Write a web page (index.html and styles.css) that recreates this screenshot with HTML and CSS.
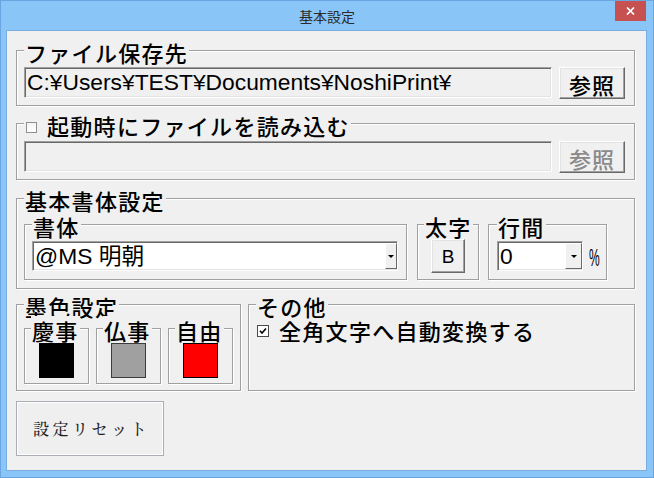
FILE: index.html
```html
<!DOCTYPE html>
<html lang="ja">
  <head>
    <meta charset="UTF-8" />
    <title>基本設定</title>
    <link rel="stylesheet" href="styles.css">
  </head>
  <body>
    <div class="window">
      <div class="titlebar">
        <div class="title">基本設定</div>
        <div class="close">
          <svg width="9" height="8" viewBox="0 0 9 8"><path d="M1 0.5 L8 7.5 M8 0.5 L1 7.5" stroke="#fff" stroke-width="1.7" fill="none"/></svg>
        </div>
      </div>

      <div class="content">
        <fieldset class="group g-save">
          <legend>ファイル保存先</legend>
          <div class="row">
            <div class="textbox">C:¥Users¥TEST¥Documents¥NoshiPrint¥</div>
            <button class="btn browse">参照</button>
          </div>
        </fieldset>

        <fieldset class="group g-load">
          <legend class="check-legend"><span class="check"></span>起動時にファイルを読み込む</legend>
          <div class="row">
            <div class="textbox"></div>
            <button class="btn browse" disabled>参照</button>
          </div>
        </fieldset>

        <fieldset class="group g-font">
          <legend>基本書体設定</legend>
          <div class="subrow">
            <fieldset class="sub sub-face">
              <legend>書体</legend>
              <div class="cell">
                <div class="select face">
                  <span class="value">@MS 明朝</span>
                  <span class="arrow"></span>
                </div>
              </div>
            </fieldset>
            <fieldset class="sub sub-bold">
              <legend>太字</legend>
              <div class="cell center">
                <button class="btn bold">B</button>
              </div>
            </fieldset>
            <fieldset class="sub sub-line">
              <legend>行間</legend>
              <div class="cell">
                <div class="select spacing">
                  <span class="value">0</span>
                  <span class="arrow"></span>
                </div>
                <span class="pct">%</span>
              </div>
            </fieldset>
          </div>
        </fieldset>

        <div class="bottom-row">
          <fieldset class="group g-ink">
            <legend>墨色設定</legend>
            <div class="inks">
              <fieldset class="sub ink">
                <legend>慶事</legend>
                <div class="swatch black"></div>
              </fieldset>
              <fieldset class="sub ink">
                <legend>仏事</legend>
                <div class="swatch gray"></div>
              </fieldset>
              <fieldset class="sub ink">
                <legend>自由</legend>
                <div class="swatch red"></div>
              </fieldset>
            </div>
          </fieldset>

          <fieldset class="group g-other">
            <legend>その他</legend>
            <div class="option">
              <span class="check checked">
                <svg width="10" height="10" viewBox="0 0 10 10"><path d="M2 4.8 L4 7 L8 2.5" stroke="#000" stroke-width="1.6" fill="none"/></svg>
              </span>
              全角文字へ自動変換する
            </div>
          </fieldset>
        </div>

        <button class="reset">設定リセット</button>
      </div>
    </div>
  </body>
</html>
```

FILE: styles.css
```css
* {
  box-sizing: border-box;
}

body {
  margin: 0;
  font-family: "Noto Sans CJK JP", sans-serif;
  background-color: #fff;
}

.window {
  width: 654px;
  height: 478px;
  background-color: #89c5f7;
  border: 1px solid #6ba5df;
  display: flex;
  flex-direction: column;
}

.titlebar {
  height: 30px;
  display: flex;
  padding-left: 38px;
  padding-right: 7px;
}

.title {
  flex: 1;
  text-align: center;
  font-size: 14px;
  line-height: 30px;
  color: #2b2b2b;
}

.close {
  width: 31px;
  height: 20px;
  background-color: #c75050;
  display: flex;
  align-items: center;
  justify-content: center;
}

.content {
  flex: 1;
  margin: 0 7px 7px 6px;
  padding: 7px 11px 0 9px;
  background-color: #f0f0f0;
  box-shadow: 0 0 0 1px #7aade2;
}

/* group boxes */
fieldset {
  margin: 0;
  min-width: 0;
  border: 1px solid #a0a0a0;
  box-shadow: 1px 1px 0 #fff, inset 1px 1px 0 #fff;
}

legend {
  padding: 4px 1px 0;
  font-size: 22px;
  font-weight: 500;
  line-height: 20px;
  letter-spacing: 1.3px;
  color: #000;
  background-color: #f0f0f0;
  white-space: nowrap;
}

.g-save {
  padding: 5px 9px 6px 7px;
}

.g-load {
  margin-top: 5px;
  padding: 6px 9px 6px 7px;
}

.g-font {
  margin-top: 6px;
  padding: 2px 7px 8px 7px;
}

.row {
  display: flex;
  align-items: flex-start;
  gap: 7px;
  height: 32px;
}

.textbox {
  flex: 1;
  height: 31px;
  padding: 0 2px;
  font-family: "Liberation Sans", "Noto Sans CJK JP", sans-serif;
  font-size: 22.8px;
  line-height: 29px;
  white-space: nowrap;
  overflow: hidden;
  background-color: #f0f0f0;
  border: 1px solid;
  border-color: #a0a0a0 #fff #fff #a0a0a0;
  box-shadow: inset 1px 1px 0 #696969, inset -1px -1px 0 #e3e3e3;
}

.btn {
  font-family: "Noto Sans CJK JP", sans-serif;
  background-color: #f0f0f0;
  color: #000;
  padding: 0;
  border: 1px solid;
  border-color: #fff #696969 #696969 #fff;
  box-shadow: inset -1px -1px 0 #a0a0a0, inset 1px 1px 0 #e3e3e3;
}

.browse {
  width: 66px;
  height: 32px;
  font-size: 22px;
  font-weight: 500;
  line-height: 26px;
  letter-spacing: 1px;
  padding-top: 2px;
}

.browse:disabled {
  color: #8a8a8a;
}

.check-legend {
  display: flex;
  align-items: center;
}

.check {
  width: 11px;
  height: 11px;
  margin: 5px 10px 0 1px;
  border: 1px solid #8f8f8f;
  background: linear-gradient(#f4f4f4, #fff);
  display: flex;
  align-items: center;
  justify-content: center;
}

/* font settings */
.subrow {
  display: flex;
}

.sub {
  padding: 3px 6px 6px 6px;
}

.sub-face {
  width: 383px;
  padding-left: 7px;
  padding-right: 8px;
}

.sub-bold {
  width: 62px;
  margin-left: 10px;
}

.sub-line {
  width: 119px;
  margin-left: 9px;
  padding-left: 8px;
}

.cell {
  display: flex;
  align-items: center;
  height: 34px;
}

.cell.center {
  justify-content: center;
}

.select {
  display: flex;
  height: 30px;
  background-color: #fff;
  border: 1px solid;
  border-color: #a0a0a0 #fff #fff #a0a0a0;
  box-shadow: inset 1px 1px 0 #696969, inset -1px -1px 0 #e3e3e3;
}

.select.face {
  width: 366px;
}

.select.spacing {
  width: 87px;
}

.select .value {
  flex: 1;
  padding-left: 2px;
  padding-top: 1px;
  font-family: "Liberation Sans", "Noto Sans CJK JP", sans-serif;
  font-size: 22.8px;
  line-height: 27px;
  white-space: nowrap;
}

.select .arrow {
  width: 12px;
  margin: 1px 0 1px 0;
  background-color: #f0f0f0;
  border: 1px solid;
  border-color: #fff #696969 #696969 #fff;
  display: flex;
  align-items: center;
  justify-content: center;
}

.select.spacing .arrow {
  width: 17px;
}

.select .arrow::after {
  content: "";
  border-left: 3px solid transparent;
  border-right: 3px solid transparent;
  border-top: 3px solid #000;
}

.bold {
  width: 34px;
  height: 34px;
  font-family: "Liberation Sans", sans-serif;
  font-size: 19px;
  line-height: 30px;
  padding-top: 1px;
}

.pct {
  display: inline-block;
  width: 11px;
  margin-left: 6px;
  margin-top: 4px;
  font-family: "Liberation Sans", sans-serif;
  font-size: 24px;
  line-height: 24px;
  transform: scaleX(0.5);
  transform-origin: left center;
}

/* ink colours */
.bottom-row {
  display: flex;
  gap: 7px;
  margin-top: 3px;
}

.g-ink {
  width: 225px;
  padding: 0 7px 6px 7px;
}

.inks {
  display: flex;
  gap: 7px;
}

.ink {
  width: 65px;
  padding: 3px 6px 5px 6px;
  display: flex;
  justify-content: center;
}

.swatch {
  width: 35px;
  height: 35px;
  border: 1px solid #000;
}

.swatch.black {
  background-color: #000;
}

.swatch.gray {
  background-color: #a0a0a0;
  border-color: #3c3c3c;
}

.swatch.red {
  background-color: #ff0000;
}

.g-other {
  flex: 1;
  padding: 2px 7px 6px 7px;
}

.option {
  display: flex;
  align-items: center;
  height: 24px;
  font-size: 22px;
  font-weight: 500;
  letter-spacing: 1.3px;
}

.option .check {
  width: 12px;
  height: 12px;
  margin: 1px 10px 0 1px;
  border-color: #4a4a4a;
  background: #fff;
}

.reset {
  display: block;
  margin-top: 10px;
  width: 148px;
  height: 55px;
  padding: 0 0 0 3px;
  font-family: "Noto Serif CJK JP", "Noto Sans CJK JP", serif;
  font-weight: 500;
  font-size: 16px;
  letter-spacing: 3.5px;
  color: #1e1e1e;
  background-color: #efefef;
  border: 1px solid #aaacb4;
  box-shadow: inset 0 0 0 1px #fff;
}
```
